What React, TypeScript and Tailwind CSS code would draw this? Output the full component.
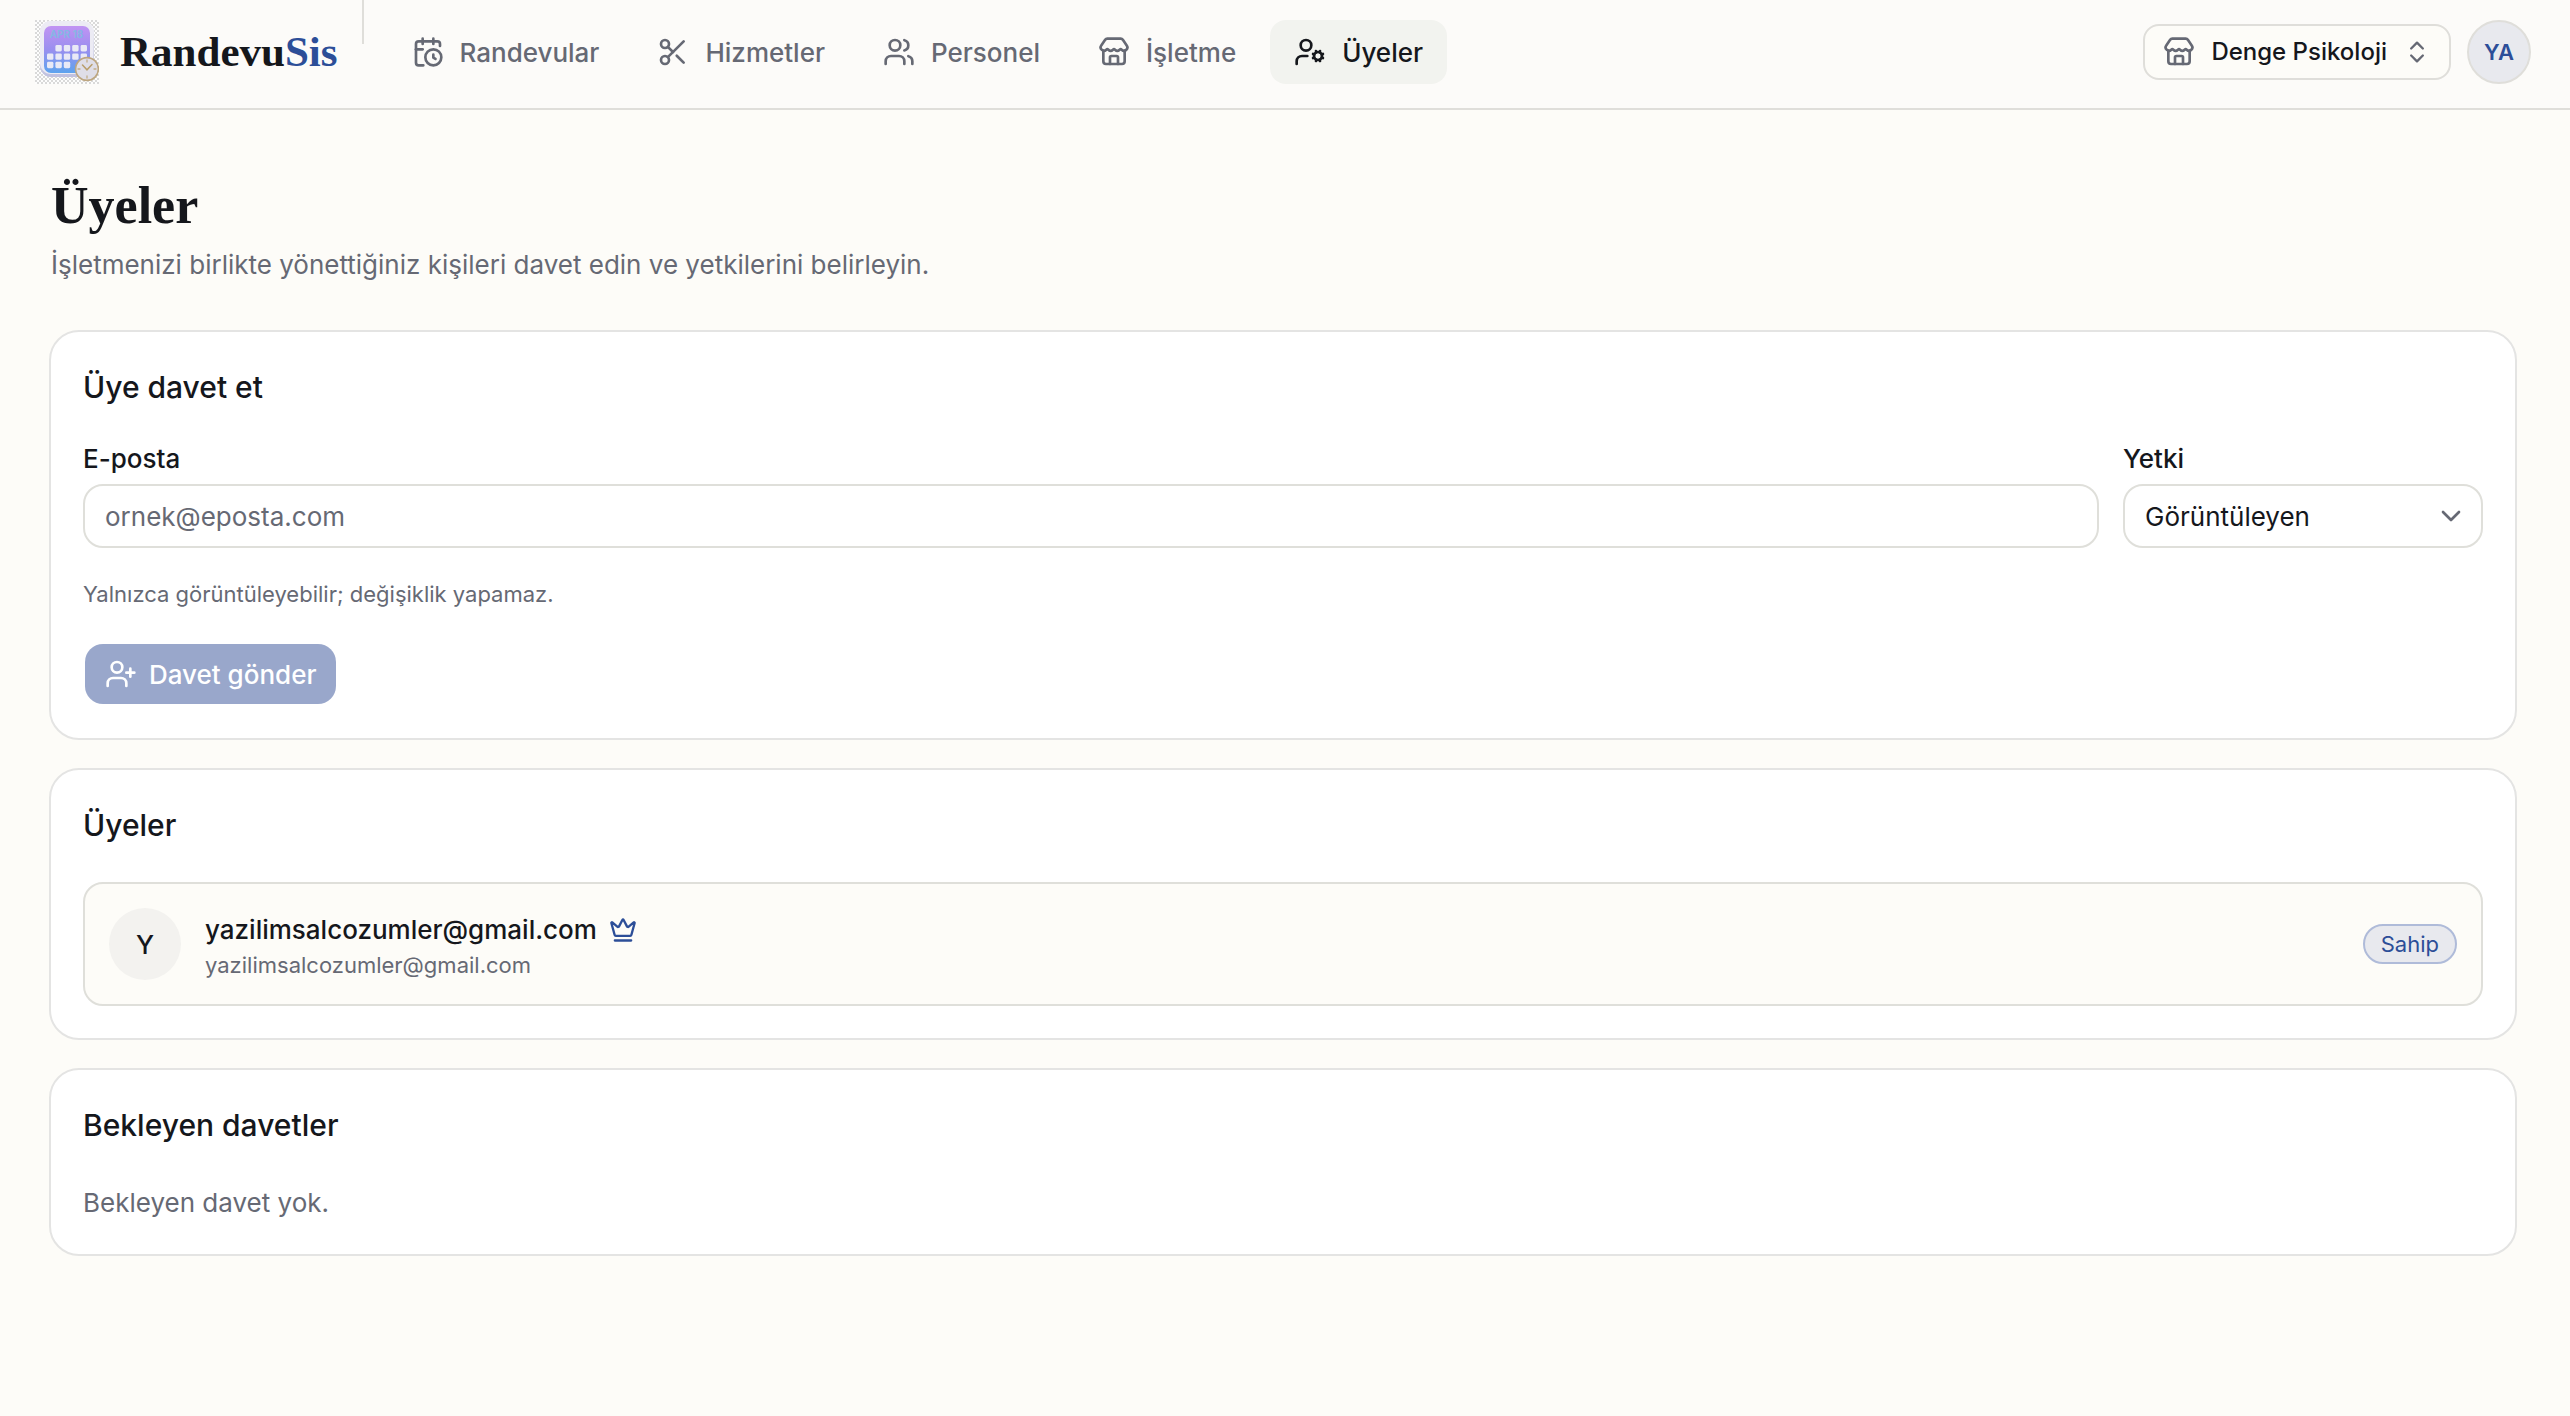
import { useState } from "react";
import type { ComponentType, ReactNode } from "react";
import { clsx } from "clsx";
import {
  CalendarClock,
  ChevronDown,
  ChevronsUpDown,
  Crown,
  Scissors,
  Store,
  UserCog,
  UserPlus,
  Users,
} from "lucide-react";

type IconType = ComponentType<{ className?: string; strokeWidth?: number }>;

interface NavItem {
  label: string;
  icon: IconType;
  active?: boolean;
}

const navItems: NavItem[] = [
  { label: "Randevular", icon: CalendarClock },
  { label: "Hizmetler", icon: Scissors },
  { label: "Personel", icon: Users },
  { label: "İşletme", icon: Store },
  { label: "Üyeler", icon: UserCog, active: true },
];

const roles = [
  { value: "viewer", label: "Görüntüleyen", hint: "Yalnızca görüntüleyebilir; değişiklik yapamaz." },
];

const members = [
  { name: "yazilimsalcozumler@gmail.com", email: "yazilimsalcozumler@gmail.com", role: "Sahip", owner: true },
];

// Calendar squares, row by row; the first cell of the month is empty
const calendarCells = [
  [1, 0], [2, 0], [3, 0], [4, 0],
  [0, 1], [1, 1], [2, 1], [3, 1], [4, 1],
  [0, 2], [1, 2], [2, 2],
];

const Logo = () => (
  <svg viewBox="0 0 64 64" className="size-16" aria-hidden="true">
    <defs>
      <pattern id="checker" width="4" height="4" patternUnits="userSpaceOnUse">
        <rect width="4" height="4" fill="#fdfdfd" />
        <rect width="2" height="2" fill="#d9d9d9" />
        <rect x="2" y="2" width="2" height="2" fill="#d9d9d9" />
      </pattern>
      <linearGradient id="sheet" x1="0" y1="0" x2="0" y2="1">
        <stop offset="0" stopColor="#c193f3" />
        <stop offset="0.5" stopColor="#9a8fef" />
        <stop offset="1" stopColor="#5da3ee" />
      </linearGradient>
      <linearGradient id="frame" x1="0" y1="0" x2="0" y2="1">
        <stop offset="0" stopColor="#f6f6f9" />
        <stop offset="1" stopColor="#bfc0df" />
      </linearGradient>
    </defs>
    <rect width="64" height="64" fill="url(#checker)" />
    <rect x="5" y="1" width="54" height="56" rx="11" fill="url(#frame)" />
    <rect x="5" y="1" width="53" height="53" rx="11" fill="#ecebf4" />
    <rect x="9" y="6" width="46" height="47" rx="7" fill="url(#sheet)" />
    <text
      x="31.5"
      y="17.5"
      textAnchor="middle"
      fontSize="10"
      fontWeight="700"
      fill="#86b6e4"
      className="font-['Inter',sans-serif]"
    >
      APR 18
    </text>
    {calendarCells.map(([col, row]) => (
      <rect
        key={`${col}-${row}`}
        x={12 + col * 8.4}
        y={25 + row * 8.4}
        width="6.4"
        height="6.4"
        rx="1.4"
        fill="#e9e9f6"
      />
    ))}
    <circle cx="52" cy="49" r="11.4" fill="#dfdee8" stroke="#bda680" strokeWidth="1.6" />
    <path d="M47.5 45 52 49.8 57 44.6" fill="none" stroke="#b99e6c" strokeWidth="1.5" strokeLinecap="round" />
    <path d="M52 40v2M52 56v2M43 49h2M59 49h2" stroke="#c2ad88" strokeWidth="1.3" strokeLinecap="round" />
  </svg>
);

const NavLink = ({ label, icon: Icon, active = false }: NavItem) => (
  <a
    href="#"
    aria-current={active ? "page" : undefined}
    className={clsx(
      "flex h-16 items-center gap-4 rounded-2xl px-6 font-medium",
      active ? "bg-[#f2f3ef] text-[#15171c]" : "text-[#666974]"
    )}
  >
    <Icon className="size-8" strokeWidth={2} />
    {label}
  </a>
);

const Card = ({ title, children }: { title: string; children: ReactNode }) => (
  <section className="rounded-[30px] border-2 border-[#e4e4e3] bg-white p-8">
    <h2 className="text-[30px] leading-[46px] font-medium">{title}</h2>
    {children}
  </section>
);

const Header = () => (
  <header className="flex items-start border-b-2 border-[#dfdeda] bg-[#fcfbf9] pr-[39px] pl-[35px]">
    <a href="#" className="mt-5 mb-6 flex h-16 items-center gap-[21px]">
      <Logo />
      <span className="font-['Liberation_Serif',serif] text-[43px] font-bold">
        Randevu<span className="text-[#2c4e98]">Sis</span>
      </span>
    </a>
    <div className="ml-6 h-11 w-[2px] bg-[#dfdeda]" />
    <nav className="mt-5 ml-6 flex gap-[10px]">
      {navItems.map((item) => (
        <NavLink key={item.label} {...item} />
      ))}
    </nav>
    <div className="mt-5 ml-auto flex h-16 items-center gap-4">
      <button
        type="button"
        className="flex h-14 items-center gap-4 rounded-2xl border-2 border-[#dfdeda] bg-[#fdfcf8] px-[18px] text-[24px] font-medium"
      >
        <Store className="size-8 text-[#666974]" strokeWidth={2} />
        Denge Psikoloji
        <ChevronsUpDown className="size-7 text-[#666974]" strokeWidth={2} />
      </button>
      <button
        type="button"
        className="size-16 rounded-full border-2 border-[#dfdeda] bg-[#e8e9ee] text-[22px] font-semibold text-[#2c4e98]"
      >
        YA
      </button>
    </div>
  </header>
);

export default function App() {
  const [email, setEmail] = useState("");
  const [role, setRole] = useState("viewer");
  const hint = roles.find((r) => r.value === role)?.hint;

  return (
    <div className="min-h-screen bg-[#fdfcf8] font-['Inter',sans-serif] text-[26px] text-[#15171c]">
      <Header />

      <main className="pt-[66px] pr-[53px] pb-20 pl-[49px]">
        <div className="px-[2px]">
          <h1 className="font-['Liberation_Serif',serif] text-[52px] leading-[60px] font-bold">Üyeler</h1>
          <p className="mt-2 leading-[42px] text-[#666974]">
            İşletmenizi birlikte yönettiğiniz kişileri davet edin ve yetkilerini belirleyin.
          </p>
        </div>

        <div className="mt-11 flex flex-col gap-7">
          <Card title="Üye davet et">
            <form onSubmit={(e) => e.preventDefault()}>
              <div className="mt-7 flex gap-6">
                <div className="flex flex-1 flex-col gap-1">
                  <label htmlFor="email" className="leading-[42px] font-medium">
                    E-posta
                  </label>
                  <input
                    id="email"
                    type="email"
                    value={email}
                    onChange={(e) => setEmail(e.target.value)}
                    placeholder="ornek@eposta.com"
                    className="h-16 w-full rounded-[20px] border-2 border-[#dfdfda] bg-white px-5 placeholder:text-[#666974]"
                  />
                </div>
                <div className="flex w-[360px] flex-col gap-1">
                  <label htmlFor="role" className="leading-[42px] font-medium">
                    Yetki
                  </label>
                  <div className="relative">
                    <select
                      id="role"
                      value={role}
                      onChange={(e) => setRole(e.target.value)}
                      className="h-16 w-full appearance-none rounded-[20px] border-2 border-[#dfdfda] bg-white px-5"
                    >
                      {roles.map((r) => (
                        <option key={r.value} value={r.value}>
                          {r.label}
                        </option>
                      ))}
                    </select>
                    <ChevronDown
                      className="pointer-events-none absolute top-4 right-4 size-8 text-[#666974]"
                      strokeWidth={2}
                    />
                  </div>
                </div>
              </div>
              <p className="mt-[30px] text-[22px] leading-8 text-[#666974]">{hint}</p>
              <button
                type="submit"
                disabled={!email}
                className="mt-8 flex h-16 items-center gap-3 rounded-[20px] border-2 border-transparent bg-[#2c4e98] bg-clip-padding px-5 font-medium text-white disabled:bg-[#99a7cb]"
              >
                <UserPlus className="size-8" strokeWidth={2} />
                Davet gönder
              </button>
            </form>
          </Card>

          <Card title="Üyeler">
            <ul className="mt-[34px] flex flex-col gap-4">
              {members.map((member) => (
                <li
                  key={member.email}
                  className="flex items-center gap-6 rounded-[20px] border-2 border-[#dfdfda] bg-[#fdfcf8] p-6"
                >
                  <div className="flex size-[72px] items-center justify-center rounded-full bg-[#f3f2ef] font-medium">
                    {member.name[0].toUpperCase()}
                  </div>
                  <div className="flex-1">
                    <div className="flex items-center gap-3 leading-[42px] font-medium">
                      {member.name}
                      {member.owner && <Crown className="size-7 text-[#2c4e98]" strokeWidth={2} />}
                    </div>
                    <div className="text-[22px] leading-7 text-[#666974]">{member.email}</div>
                  </div>
                  <span className="flex h-10 items-center rounded-full border-2 border-[#afbbd9] bg-[#e8e9ee] px-4 text-[22px] text-[#2c4e98]">
                    {member.role}
                  </span>
                </li>
              ))}
            </ul>
          </Card>

          <Card title="Bekleyen davetler">
            <p className="mt-9 leading-[38px] text-[#666974]">Bekleyen davet yok.</p>
          </Card>
        </div>
      </main>
    </div>
  );
}
